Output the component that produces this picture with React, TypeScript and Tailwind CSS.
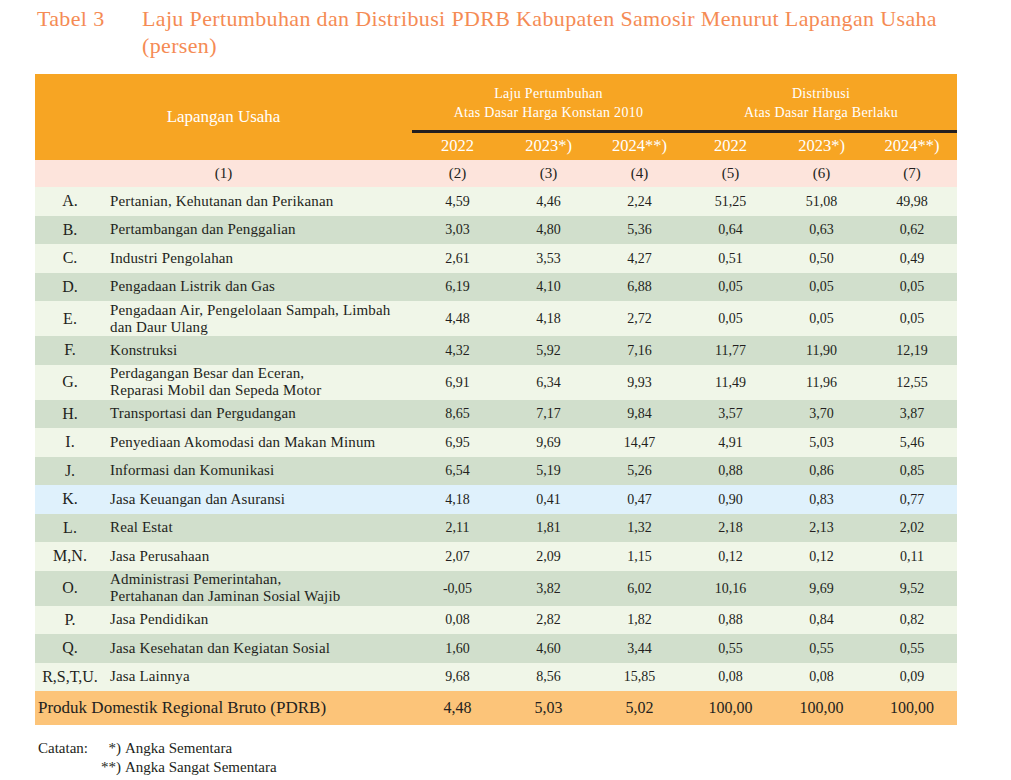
const rows: { code: string; name: string[]; v: string[]; bg: string }[] = [
  { code: 'A.', name: ['Pertanian, Kehutanan dan Perikanan'], v: ['4,59', '4,46', '2,24', '51,25', '51,08', '49,98'], bg: 'bg-[#f0f6e8]' },
  { code: 'B.', name: ['Pertambangan dan Penggalian'], v: ['3,03', '4,80', '5,36', '0,64', '0,63', '0,62'], bg: 'bg-[#d1dfcc]' },
  { code: 'C.', name: ['Industri Pengolahan'], v: ['2,61', '3,53', '4,27', '0,51', '0,50', '0,49'], bg: 'bg-[#f0f6e8]' },
  { code: 'D.', name: ['Pengadaan Listrik dan Gas'], v: ['6,19', '4,10', '6,88', '0,05', '0,05', '0,05'], bg: 'bg-[#d1dfcc]' },
  { code: 'E.', name: ['Pengadaan Air, Pengelolaan Sampah, Limbah', 'dan Daur Ulang'], v: ['4,48', '4,18', '2,72', '0,05', '0,05', '0,05'], bg: 'bg-[#f0f6e8]' },
  { code: 'F.', name: ['Konstruksi'], v: ['4,32', '5,92', '7,16', '11,77', '11,90', '12,19'], bg: 'bg-[#d1dfcc]' },
  { code: 'G.', name: ['Perdagangan Besar dan Eceran,', 'Reparasi Mobil dan Sepeda Motor'], v: ['6,91', '6,34', '9,93', '11,49', '11,96', '12,55'], bg: 'bg-[#f0f6e8]' },
  { code: 'H.', name: ['Transportasi dan Pergudangan'], v: ['8,65', '7,17', '9,84', '3,57', '3,70', '3,87'], bg: 'bg-[#d1dfcc]' },
  { code: 'I.', name: ['Penyediaan Akomodasi dan Makan Minum'], v: ['6,95', '9,69', '14,47', '4,91', '5,03', '5,46'], bg: 'bg-[#f0f6e8]' },
  { code: 'J.', name: ['Informasi dan Komunikasi'], v: ['6,54', '5,19', '5,26', '0,88', '0,86', '0,85'], bg: 'bg-[#d1dfcc]' },
  { code: 'K.', name: ['Jasa Keuangan dan Asuransi'], v: ['4,18', '0,41', '0,47', '0,90', '0,83', '0,77'], bg: 'bg-[#dff1fc]' },
  { code: 'L.', name: ['Real Estat'], v: ['2,11', '1,81', '1,32', '2,18', '2,13', '2,02'], bg: 'bg-[#d1dfcc]' },
  { code: 'M,N.', name: ['Jasa Perusahaan'], v: ['2,07', '2,09', '1,15', '0,12', '0,12', '0,11'], bg: 'bg-[#f0f6e8]' },
  { code: 'O.', name: ['Administrasi Pemerintahan,', 'Pertahanan dan Jaminan Sosial Wajib'], v: ['-0,05', '3,82', '6,02', '10,16', '9,69', '9,52'], bg: 'bg-[#d1dfcc]' },
  { code: 'P.', name: ['Jasa Pendidikan'], v: ['0,08', '2,82', '1,82', '0,88', '0,84', '0,82'], bg: 'bg-[#f0f6e8]' },
  { code: 'Q.', name: ['Jasa Kesehatan dan Kegiatan Sosial'], v: ['1,60', '4,60', '3,44', '0,55', '0,55', '0,55'], bg: 'bg-[#d1dfcc]' },
  { code: 'R,S,T,U.', name: ['Jasa Lainnya'], v: ['9,68', '8,56', '15,85', '0,08', '0,08', '0,09'], bg: 'bg-[#f0f6e8]' },
];

const years = ['2022', '2023*)', '2024**)', '2022', '2023*)', '2024**)'];

export default function App() {
  return (
    <div className="w-[1011px] h-[780px] bg-white text-[#231f20] font-['Liberation_Serif',serif]">
      <div className="flex pl-[37px] pt-[5px] text-[22px] leading-[27px] tracking-[0.35px] text-[#f58b54]">
        <div className="w-[105px] shrink-0">Tabel 3</div>
        <div>
          Laju Pertumbuhan dan Distribusi PDRB Kabupaten Samosir Menurut Lapangan Usaha
          <br />
          (persen)
        </div>
      </div>

      <table className="ml-[35px] mt-[15px] w-[922px] table-fixed border-collapse text-[14px]">
        <colgroup>
          <col className="w-[70px]" />
          <col className="w-[307px]" />
          <col className="w-[91px]" />
          <col className="w-[91px]" />
          <col className="w-[91px]" />
          <col className="w-[91px]" />
          <col className="w-[91px]" />
          <col className="w-[90px]" />
        </colgroup>
        <thead className="bg-[#f7a523] text-white">
          <tr className="h-[57px]">
            <th rowSpan={2} colSpan={2} className="font-normal text-[17px]">
              Lapangan Usaha
            </th>
            <th colSpan={3} className="font-normal text-[14px] leading-[19px] tracking-[0.3px] border-b-[3px] border-[#231f20] pt-[2px]">
              Laju Pertumbuhan
              <br />
              Atas Dasar Harga Konstan 2010
            </th>
            <th colSpan={3} className="font-normal text-[14px] leading-[19px] tracking-[0.3px] border-b-[3px] border-[#231f20] pt-[2px]">
              Distribusi
              <br />
              Atas Dasar Harga Berlaku
            </th>
          </tr>
          <tr className="h-[29px]">
            {years.map((y, i) => (
              <th key={i} className="font-normal text-[16.5px]">
                {y}
              </th>
            ))}
          </tr>
        </thead>
        <tbody>
          <tr className="h-[27px] bg-[#fde4dc] text-center text-[15px]">
            <td colSpan={2}>(1)</td>
            {[2, 3, 4, 5, 6, 7].map((n) => (
              <td key={n}>({n})</td>
            ))}
          </tr>
          {rows.map((r) => (
            <tr key={r.code} className={`${r.bg} ${r.name.length > 1 ? 'h-[35px]' : 'h-[28.5px]'}`}>
              <td className="text-center text-[16px]">{r.code}</td>
              <td className="pl-[5px] text-[15px] leading-[17px] tracking-[0.15px]">
                {r.name.map((n) => (
                  <div key={n}>{n}</div>
                ))}
              </td>
              {r.v.map((x, i) => (
                <td key={i} className="text-center">
                  {x}
                </td>
              ))}
            </tr>
          ))}
          <tr className="h-[34px] bg-[#fcc479] text-[16px]">
            <td colSpan={2} className="pl-[3px] text-[17px]">
              Produk Domestik Regional Bruto (PDRB)
            </td>
            {['4,48', '5,03', '5,02', '100,00', '100,00', '100,00'].map((x, i) => (
              <td key={i} className="text-center">
                {x}
              </td>
            ))}
          </tr>
        </tbody>
      </table>

      <div className="ml-[38px] mt-[14px] text-[15px] leading-[19px]">
        <div className="flex">
          <div className="w-[62px]">Catatan:</div>
          <div className="w-[21px] text-right">*)</div>
          <div className="pl-[4px]">Angka Sementara</div>
        </div>
        <div className="flex">
          <div className="w-[62px]" />
          <div className="w-[21px] text-right">**)</div>
          <div className="pl-[4px]">Angka Sangat Sementara</div>
        </div>
      </div>
    </div>
  );
}
